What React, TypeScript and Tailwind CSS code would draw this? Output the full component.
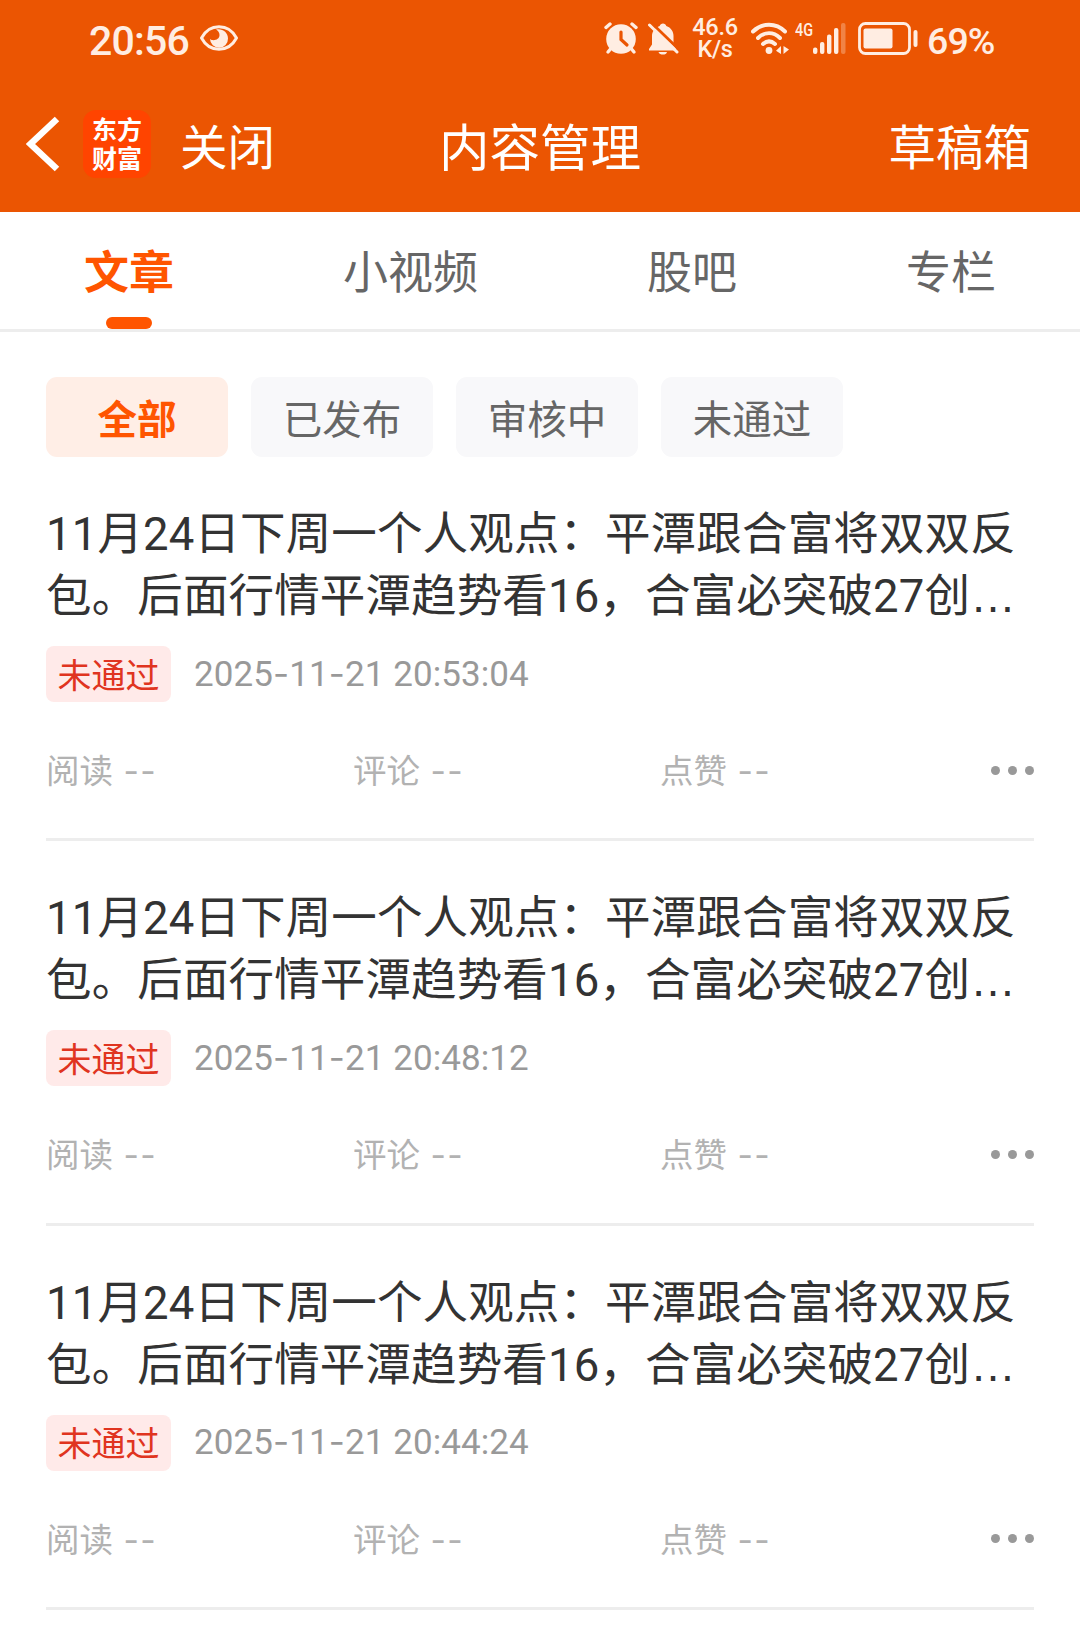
import { useState } from "react";
import { clsx } from "clsx";

interface Article {
  id: number;
  title: string;
  status: string;
  time: string;
}

const TITLE = "11月24日下周一个人观点：平潭跟合富将双双反包。后面行情平潭趋势看16，合富必突破27创";

const tabs = ["文章", "小视频", "股吧", "专栏"];
const filters = ["全部", "已发布", "审核中", "未通过"];
const stats = ["阅读", "评论", "点赞"];

const articles: Article[] = [
  { id: 1, title: TITLE, status: "未通过", time: "2025-11-21 20:53:04" },
  { id: 2, title: TITLE, status: "未通过", time: "2025-11-21 20:48:12" },
  { id: 3, title: TITLE, status: "未通过", time: "2025-11-21 20:44:24" },
];

function EyeIcon() {
  return (
    <svg className="ml-[10px] h-[28px] w-[40px]" viewBox="0 0 40 28" fill="none">
      <path d="M2.500 14C10.500 -1 29.500 -1 37.500 14C29.500 29 10.500 29 2.500 14Z" stroke="currentColor" strokeWidth="3" strokeLinejoin="round" />
      <path d="M17 5.500C23 4 29 8 29 14.500A9 9 0 0 1 11 15C14 17.500 20.500 16 20.500 11C20.500 8.500 19 6.500 17 5.500Z" fill="currentColor" />
    </svg>
  );
}

function AlarmIcon() {
  return (
    <svg className="h-[34px] w-[36px]" viewBox="0 0 36 34" fill="none" stroke="currentColor" strokeLinecap="round">
      <circle cx="17" cy="18" r="14.800" fill="currentColor" stroke="none" />
      <path d="M2 6.500L6 3M32 6.500L28 3" strokeWidth="3.400" />
      <path d="M6.500 28L4 31M27.500 28L30 31" strokeWidth="3.400" />
      <path d="M17 11V18.500L23 24" className="stroke-[#eb5502]" strokeWidth="3.200" />
    </svg>
  );
}

function BellOffIcon() {
  return (
    <svg className="ml-[7px] h-[34px] w-[32px]" viewBox="0 0 32 34" fill="none">
      <path
        d="M16 2.500C17.500 2.500 19 3.500 19.300 5C24 6.500 26.500 10.500 26.500 15V23L29 28V29.500H2V28L5 23.500V15C5 10.500 8 6.500 12.700 5C13 3.500 14.500 2.500 16 2.500Z"
        fill="currentColor"
      />
      <path d="M11.500 31H20C19.500 33 18 33.600 16 33.600S12 33 11.500 31Z" fill="currentColor" />
      <path d="M4 1.500L32.500 29" className="stroke-[#eb5502]" strokeWidth="3" />
      <path d="M2.500 4L30 31" stroke="currentColor" strokeWidth="3" strokeLinecap="round" />
    </svg>
  );
}

function WifiIcon() {
  return (
    <svg className="ml-[11px] h-[34px] w-[38px]" viewBox="0 0 38 34" fill="none" stroke="currentColor" strokeLinecap="round">
      <path d="M2 10.500C11 1.500 25 1.500 34 10.500" strokeWidth="3.900" />
      <path d="M7 17C13.500 10.500 22.500 10.500 29 17" strokeWidth="3.900" />
      <path d="M12 23C16 19.500 20 19.500 24 23" strokeWidth="3.900" />
      <circle cx="18" cy="29.500" r="3.400" fill="currentColor" stroke="none" />
      <path d="M30 25V33L25 29.800ZM32.500 25V33L38 28.500Z" fill="currentColor" stroke="none" />
    </svg>
  );
}

function SignalIcon() {
  return (
    <svg className="h-[34px] w-[33px]" viewBox="0 0 33 34" fill="currentColor">
      <rect x="0" y="26.500" width="4.400" height="6.500" rx="2" />
      <rect x="7" y="21" width="4.400" height="12" rx="2" />
      <rect x="14" y="13.500" width="4.400" height="19.500" rx="2" />
      <rect x="21" y="7" width="4.400" height="26" rx="2" />
      <rect x="28" y="2" width="4.500" height="31" rx="2" opacity="0.3" />
    </svg>
  );
}

function BatteryIcon() {
  return (
    <svg className="ml-[12px] h-[34px] w-[60px]" viewBox="0 0 60 34" fill="none">
      <rect x="1.500" y="2.500" width="50" height="30" rx="6" stroke="currentColor" strokeWidth="2.800" />
      <rect x="5.500" y="7.500" width="29" height="20" rx="2" fill="currentColor" />
      <rect x="55.500" y="9" width="4" height="17" rx="2" fill="currentColor" />
    </svg>
  );
}

function StatusBar() {
  return (
    <div className="flex h-[76px] items-center pr-[80px] pl-[89px] font-['Roboto',sans-serif] font-medium text-[#ffede2]">
      <span className="mt-[5px] text-[41px] leading-[40px] tracking-[-0.800px]">20:56</span>
      <EyeIcon />
      <div className="ml-auto flex items-center">
        <AlarmIcon />
        <BellOffIcon />
        <div className="ml-[11px] flex w-[50px] flex-col items-center text-[23.500px] leading-[22px] tracking-[-0.3px]">
          <span>46.6</span>
          <span>K/s</span>
        </div>
        <WifiIcon />
        <span className="ml-[6px] h-[34px] w-[18px] origin-left scale-x-[0.76] text-[19px] leading-[18px]">4G</span>
        <SignalIcon />
        <BatteryIcon />
        <span className="mt-[5px] ml-[9px] w-[73px] text-[37.500px] leading-[40px] tracking-[-0.9px]">69%</span>
      </div>
    </div>
  );
}

function NavBar() {
  return (
    <div className="grid h-[136px] grid-cols-3 items-center text-[47.500px] leading-[60px] text-white">
      <div className="flex items-center pl-[26px]">
        <svg className="h-[56px] w-[34px]" viewBox="0 0 34 56" fill="none">
          <path d="M31 3L4.500 28L31 53" stroke="currentColor" strokeWidth="6.500" />
        </svg>
        <div className="ml-[23px] flex h-[68px] w-[68px] flex-col items-center justify-center rounded-[13px] bg-[#ff4400] text-[25px] leading-[29px] font-bold">
          <span className="-mt-[3px]">东方</span>
          <span>财富</span>
        </div>
        <span className="mt-[2px] ml-[29px]">关闭</span>
      </div>
      <h1 className="text-center text-[50.500px]">内容管理</h1>
      <span className="mt-[2px] pr-[49px] text-right">草稿箱</span>
    </div>
  );
}

// Roboto's hyphen is too short next to the digits, Inter's has the right width
function Timestamp({ value }: { value: string }) {
  return (
    <time className="ml-[23px] font-['Roboto',sans-serif] text-[35px] tracking-[0.08px] text-[#999999]">
      {value.split("-").map((part, i) => (
        <span key={i}>
          {i > 0 && <span className="font-['Inter']">-</span>}
          {part}
        </span>
      ))}
    </time>
  );
}

function ArticleRow({ article }: { article: Article }) {
  return (
    <li className="border-b-[3px] border-[#ededed] pt-[47px] pb-[44.25px]">
      <h2 className="h-[124px] font-['Roboto','Noto_Sans_CJK_SC',sans-serif] text-[45.500px] leading-[62px] tracking-[0.13px] break-all text-[#333333]">
        {article.title}
        <span className="font-['Liberation_Sans'] leading-none">…</span>
      </h2>
      <div className="mt-[18px] flex h-[56px] items-center">
        <span className="flex h-[56px] w-[125px] items-center justify-center rounded-[8px] bg-[#ffeae9] pb-[2px] text-[34px] text-[#e03420]">
          {article.status}
        </span>
        <Timestamp value={article.time} />
      </div>
      <div className="mt-[44px] flex h-[48px] items-center text-[33.500px] leading-[48px] text-[#b2b2b2]">
        {stats.map((label) => (
          <span key={label} className="w-[307px]">
            {label}
            <span className="font-['Inter'] tracking-[1.2px]"> --</span>
          </span>
        ))}
        <button type="button" className="ml-auto flex gap-[8px]" aria-label="更多">
          <i className="size-[9px] rounded-full bg-[#999999]" />
          <i className="size-[9px] rounded-full bg-[#999999]" />
          <i className="size-[9px] rounded-full bg-[#999999]" />
        </button>
      </div>
    </li>
  );
}

export default function App() {
  const [activeTab, setActiveTab] = useState("文章");
  const [activeFilter, setActiveFilter] = useState("全部");

  return (
    <div className="h-[1641px] w-[1080px] overflow-hidden bg-white font-['Noto_Sans_CJK_SC',sans-serif]">
      <header className="bg-[#eb5502]">
        <StatusBar />
        <NavBar />
      </header>

      <nav className="flex justify-between border-b-[3px] border-[#ededed] px-[84px] pt-[28px]">
        {tabs.map((tab) => (
          <button
            key={tab}
            type="button"
            onClick={() => setActiveTab(tab)}
            className={clsx(
              "flex flex-col items-center text-[45px] leading-[60px]",
              tab === activeTab ? "font-bold text-[#ff5500]" : "text-[#666666]"
            )}
          >
            {tab}
            <i className={clsx("mt-[17px] h-[12px] w-[46px] rounded-full", tab === activeTab && "bg-[#ff5500]")} />
          </button>
        ))}
      </nav>

      <div className="flex gap-[23px] px-[46px] pt-[45px]">
        {filters.map((filter) => (
          <button
            key={filter}
            type="button"
            onClick={() => setActiveFilter(filter)}
            className={clsx(
              "h-[80px] w-[182px] rounded-[11px] text-[39.500px]",
              filter === activeFilter ? "bg-[#ffeee6] font-bold text-[#ff5500]" : "bg-[#f8f8fa] text-[#666666]"
            )}
          >
            {filter}
          </button>
        ))}
      </div>

      <ul className="px-[46px]">
        {articles.map((article) => (
          <ArticleRow key={article.id} article={article} />
        ))}
      </ul>
    </div>
  );
}
